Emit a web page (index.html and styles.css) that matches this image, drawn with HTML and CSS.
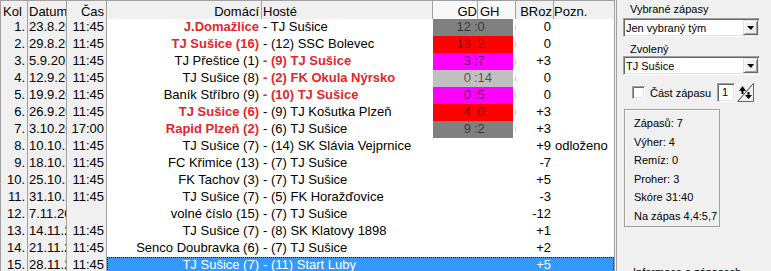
FILE: index.html
```html
<!DOCTYPE html>
<html lang="cs">
<head>
  <meta charset="UTF-8">
  <title>Rozpis zápasů</title>
  <link rel="stylesheet" href="styles.css">
</head>
<body>
<div class="app">
  <div class="grid">
    <div class="row head">
      <span class="c kol">Kol</span><span class="c dat">Datum</span><span class="c cas">Čas</span>
      <span class="dom">Domácí</span><span class="hos">Hosté</span><span class="gd">GD</span><span class="gh">GH</span><span class="broz">BRoz</span><span class="pozn">Pozn.</span>
    </div>

    <div class="row">
      <span class="c kol">1.</span><span class="c dat">23.8.2020</span><span class="c cas">11:45</span>
      <div class="data">
        <span class="dom win">J.Domažlice</span><span class="hos">- TJ Sušice</span>
        <span class="score s-gray"><span class="gd">12</span><span class="gh">:0</span></span><span class="tick on"></span>
        <span class="broz">0</span><span class="pozn"></span>
      </div>
    </div>
    <div class="row">
      <span class="c kol">2.</span><span class="c dat">29.8.2020</span><span class="c cas">11:45</span>
      <div class="data">
        <span class="dom win">TJ Sušice (16)</span><span class="hos">- (12) SSC Bolevec</span>
        <span class="score s-red"><span class="gd">13</span><span class="gh">:2</span></span><span class="tick on"></span>
        <span class="broz">0</span><span class="pozn"></span>
      </div>
    </div>
    <div class="row">
      <span class="c kol">3.</span><span class="c dat">5.9.2020</span><span class="c cas">11:45</span>
      <div class="data">
        <span class="dom">TJ Přeštice (1)</span><span class="hos win">- (9) TJ Sušice</span>
        <span class="score s-mag"><span class="gd">3</span><span class="gh">:7</span></span><span class="tick on"></span>
        <span class="broz">+3</span><span class="pozn"></span>
      </div>
    </div>
    <div class="row">
      <span class="c kol">4.</span><span class="c dat">12.9.2020</span><span class="c cas">11:45</span>
      <div class="data">
        <span class="dom">TJ Sušice (8)</span><span class="hos win">- (2) FK Okula Nýrsko</span>
        <span class="score s-light"><span class="gd">0</span><span class="gh">:14</span></span><span class="tick on"></span>
        <span class="broz">0</span><span class="pozn"></span>
      </div>
    </div>
    <div class="row">
      <span class="c kol">5.</span><span class="c dat">19.9.2020</span><span class="c cas">11:45</span>
      <div class="data">
        <span class="dom">Baník Stříbro (9)</span><span class="hos win">- (10) TJ Sušice</span>
        <span class="score s-mag"><span class="gd">0</span><span class="gh">:5</span></span><span class="tick on"></span>
        <span class="broz">0</span><span class="pozn"></span>
      </div>
    </div>
    <div class="row">
      <span class="c kol">6.</span><span class="c dat">26.9.2020</span><span class="c cas">11:45</span>
      <div class="data">
        <span class="dom win">TJ Sušice (6)</span><span class="hos">- (9) TJ Košutka Plzeň</span>
        <span class="score s-red"><span class="gd">4</span><span class="gh">:0</span></span><span class="tick on"></span>
        <span class="broz">+3</span><span class="pozn"></span>
      </div>
    </div>
    <div class="row">
      <span class="c kol">7.</span><span class="c dat">3.10.2020</span><span class="c cas">17:00</span>
      <div class="data">
        <span class="dom win">Rapid Plzeň (2)</span><span class="hos">- (6) TJ Sušice</span>
        <span class="score s-gray"><span class="gd">9</span><span class="gh">:2</span></span><span class="tick on"></span>
        <span class="broz">+3</span><span class="pozn"></span>
      </div>
    </div>
    <div class="row">
      <span class="c kol">8.</span><span class="c dat">10.10.2020</span><span class="c cas">11:45</span>
      <div class="data">
        <span class="dom">TJ Sušice (7)</span><span class="hos">- (14) SK Slávia Vejprnice</span>
        <span class="score"></span><span class="tick"></span>
        <span class="broz">+9</span><span class="pozn">odloženo</span>
      </div>
    </div>
    <div class="row">
      <span class="c kol">9.</span><span class="c dat">18.10.2020</span><span class="c cas">11:45</span>
      <div class="data">
        <span class="dom">FC Křimice (13)</span><span class="hos">- (7) TJ Sušice</span>
        <span class="score"></span><span class="tick"></span>
        <span class="broz">-7</span><span class="pozn"></span>
      </div>
    </div>
    <div class="row">
      <span class="c kol">10.</span><span class="c dat">25.10.2020</span><span class="c cas">11:45</span>
      <div class="data">
        <span class="dom">FK Tachov (3)</span><span class="hos">- (7) TJ Sušice</span>
        <span class="score"></span><span class="tick"></span>
        <span class="broz">+5</span><span class="pozn"></span>
      </div>
    </div>
    <div class="row">
      <span class="c kol">11.</span><span class="c dat">31.10.2020</span><span class="c cas">11:45</span>
      <div class="data">
        <span class="dom">TJ Sušice (7)</span><span class="hos">- (5) FK Horažďovice</span>
        <span class="score"></span><span class="tick"></span>
        <span class="broz">-3</span><span class="pozn"></span>
      </div>
    </div>
    <div class="row">
      <span class="c kol">12.</span><span class="c dat">7.11.2020</span><span class="c cas"></span>
      <div class="data">
        <span class="dom">volné číslo (15)</span><span class="hos">- (7) TJ Sušice</span>
        <span class="score"></span><span class="tick"></span>
        <span class="broz">-12</span><span class="pozn"></span>
      </div>
    </div>
    <div class="row">
      <span class="c kol">13.</span><span class="c dat">14.11.2020</span><span class="c cas">11:45</span>
      <div class="data">
        <span class="dom">TJ Sušice (7)</span><span class="hos">- (8) SK Klatovy 1898</span>
        <span class="score"></span><span class="tick"></span>
        <span class="broz">+1</span><span class="pozn"></span>
      </div>
    </div>
    <div class="row">
      <span class="c kol">14.</span><span class="c dat">21.11.2020</span><span class="c cas">11:45</span>
      <div class="data">
        <span class="dom">Senco Doubravka (6)</span><span class="hos">- (7) TJ Sušice</span>
        <span class="score"></span><span class="tick"></span>
        <span class="broz">+2</span><span class="pozn"></span>
      </div>
    </div>
    <div class="row sel">
      <span class="c kol">15.</span><span class="c dat">28.11.2020</span><span class="c cas">11:45</span>
      <div class="data">
        <span class="dom">TJ Sušice (7)</span><span class="hos">- (11) Start Luby</span>
        <span class="score"></span><span class="tick"></span>
        <span class="broz">+5</span><span class="pozn"></span>
      </div>
    </div>
  </div>

  <div class="split"></div>

  <div class="side">
    <div class="lbl">Vybrané zápasy</div>
    <div class="combo">Jen vybraný tým<span class="drop"></span></div>
    <div class="lbl lbl2">Zvolený</div>
    <div class="combo">TJ Sušice<span class="drop"></span></div>

    <div class="check-row">
      <span class="chk"></span>
      <span class="chk-lbl">Část zápasu</span>
      <span class="spin-edit">1</span>
      <svg class="spin-btn" width="17" height="19" viewBox="0 0 17 19">
        <rect x="0" y="0" width="17" height="19" fill="#f0f0f0"/>
        <path d="M0 18.5V0.5H16.5" stroke="#fff" fill="none"/>
        <path d="M0.5 18.5H16.5V0" stroke="#696969" fill="none"/>
        <line x1="1" y1="18" x2="16" y2="1" stroke="#404040"/>
        <polygon points="2,8 9,8 5.5,3" fill="#000"/>
        <rect x="4.5" y="8" width="2" height="3" fill="#000"/>
        <polygon points="8,12 15,12 11.5,16" fill="#000"/>
        <rect x="10.5" y="9" width="2" height="3" fill="#000"/>
      </svg>
    </div>

    <div class="stats">
      <div>Zápasů: 7</div>
      <div>Výher: 4</div>
      <div>Remíz: 0</div>
      <div>Proher: 3</div>
      <div>Skóre 31:40</div>
      <div>Na zápas 4,4:5,7</div>
    </div>

    <div class="foot">Informace o zápasech</div>
  </div>
</div>
</body>
</html>
```

FILE: styles.css
```css
* {
  box-sizing: border-box;
}
body {
  margin: 0;
  background: #f0f0f0;
  font-family: "Liberation Sans", Arial, sans-serif;
  overflow: hidden;
}
.app {
  display: flex;
  width: 771px;
  height: 271px;
  overflow: hidden;
}

/* grid */
.grid {
  flex: none;
  width: 615px;
  border-top: 1px solid #a0a0a0;
  border-left: 1px solid #a0a0a0;
  border-right: 1px solid #a0a0a0;
  background: #fff;
  font-size: 13px;
  color: #000;
}
.row {
  display: flex;
  height: 17px;
  line-height: 15px;
  white-space: nowrap;
}
.row > span, .data > span {
  overflow: hidden;
  height: 100%;
}
.row.head {
  height: 18px;
  background: #f0f0f0;
}
.row.head > span {
  padding-top: 3px;
  border-right: 1px solid #a0a0a0;
}
.c {
  background: #f0f0f0;
  border-right: 1px solid #a0a0a0;
}
.kol {
  width: 27px;
  text-align: right;
  padding-right: 2px;
}
.dat {
  width: 39px;
  padding-left: 1px;
}
.cas {
  width: 40px;
  text-align: right;
  padding-right: 2px;
}
.data {
  display: flex;
  flex: 1;
}
.dom {
  width: 155px;
  text-align: right;
  padding-right: 3px;
}
.hos {
  width: 171px;
  padding-left: 1px;
}
.score {
  width: 80px;
  display: flex;
  color: rgba(0, 0, 0, 0.6);
}
.score .gd {
  width: 39px;
  text-align: right;
  padding-right: 1px;
}
.score .gh {
  padding-left: 2px;
}
.s-gray { background: #808080; }
.s-red { background: #ff0000; }
.s-mag { background: #ff00ff; }
.s-light { background: #c0c0c0; }
.tick {
  width: 3px;
  position: relative;
}
.tick.on::after {
  content: "";
  position: absolute;
  left: 2px;
  top: 6px;
  width: 1px;
  height: 5px;
  background: #dccbb4;
}
.broz {
  width: 37px;
  text-align: right;
  padding-right: 2px;
}
.pozn {
  width: 61px;
  padding-left: 2px;
}
.win {
  font-weight: bold;
  color: #e3262b;
}

/* header cells */
.head .kol {
  text-align: left;
  padding-left: 2px;
}
.head .dom {
  padding-right: 2px;
}
.head .gd {
  width: 45px;
  text-align: right;
  background: #f8f8f8;
}
.head .gh {
  width: 38px;
  padding-left: 2px;
  background: #f8f8f8;
}
.head .broz {
  width: 38px;
  padding-right: 1px;
}
.row.head .pozn {
  width: 60px;
  padding-left: 0;
  border-right: none;
}

/* selected row */
.row.sel .data {
  background: #3399ff;
  color: #fff;
  outline: 1px dotted #1a1a1a;
  outline-offset: -1px;
}

.split {
  flex: none;
  width: 2px;
  border-right: 1px solid #a0a0a0;
}

/* side panel */
.side {
  flex: 1;
  font-size: 11px;
  padding-top: 3px;
  color: #000;
}
.lbl {
  margin-left: 13px;
  line-height: 13px;
  height: 13px;
}
.lbl2 {
  margin-top: 6px;
}
.combo {
  display: flex;
  align-items: center;
  margin: 2px 0 0 6px;
  width: 137px;
  height: 19px;
  padding-left: 2px;
  background: #fff;
  border: 1px solid;
  border-color: #a0a0a0 #fff #fff #a0a0a0;
  box-shadow: inset 1px 1px #696969, inset -1px -1px #e3e3e3;
}
.lbl2 + .combo {
  margin-top: 0;
}
.drop {
  margin-left: auto;
  margin-right: 1px;
  width: 15px;
  height: 15px;
  background: #f0f0f0;
  border: 1px solid;
  border-color: #e3e3e3 #696969 #696969 #e3e3e3;
  box-shadow: inset 1px 1px #fff, inset -1px -1px #a0a0a0;
  display: flex;
  align-items: center;
  justify-content: center;
}
.drop::after {
  content: "";
  border-left: 4px solid transparent;
  border-right: 3px solid transparent;
  border-top: 4px solid #000;
}
.check-row {
  display: flex;
  align-items: center;
  height: 19px;
  margin-top: 8px;
}
.chk {
  margin-left: 15px;
  width: 13px;
  height: 13px;
  background: #fff;
  border: 1px solid;
  border-color: #a0a0a0 #fff #fff #a0a0a0;
  box-shadow: inset 1px 1px #696969, inset -1px -1px #e3e3e3;
}
.chk-lbl {
  margin-left: 5px;
  width: 67px;
}
.spin-edit {
  width: 18px;
  height: 19px;
  line-height: 17px;
  padding-left: 4px;
  background: #fff;
  border: 1px solid;
  border-color: #a0a0a0 #fff #fff #a0a0a0;
  box-shadow: inset 1px 1px #696969, inset -1px -1px #e3e3e3;
}
.spin-btn {
  margin-left: 2px;
  display: block;
}
.stats {
  margin: 7px 0 0 7px;
  width: 96px;
  height: 118px;
  padding: 4px 0 0 9px;
  line-height: 18.6px;
  border: 1px solid #a0a0a0;
  box-shadow: inset 1px 1px #fff;
}
.foot {
  margin: 39px 0 0 16px;
  line-height: 13px;
  white-space: nowrap;
}
```
